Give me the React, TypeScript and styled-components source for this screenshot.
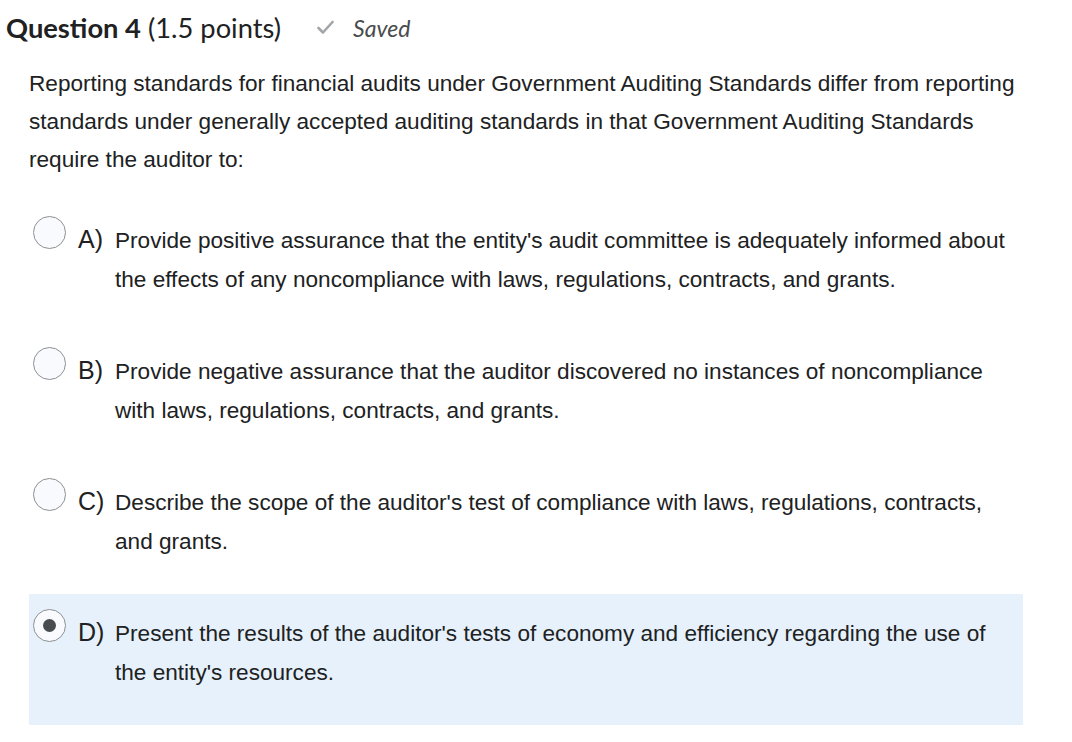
import React from "react";
import styled, { createGlobalStyle } from "styled-components";

const Global = createGlobalStyle`
  html, body { margin: 0; padding: 0; background: #ffffff; }
  body { font-family: "Liberation Sans", Arial, sans-serif; color: #202122; }
`;

const Page = styled.div`
  width: 1072px;
  height: 742px;
  overflow: hidden;
  box-sizing: border-box;
  padding: 0 49px 0 0;
`;

const Header = styled.div`
  display: flex;
  align-items: center;
  height: 55px;
  padding-left: 6px;
  font-family: Lato, "Liberation Sans", sans-serif;
`;

const Title = styled.h2`
  margin: 0;
  font-size: 27.3px;
  font-weight: 400;
  color: #202122;
  strong { font-weight: 700; }
`;

const SavedTag = styled.span`
  display: flex;
  align-items: center;
  gap: 19px;
  margin-left: 36px;
  font-style: italic;
  font-size: 23px;
  color: #494c4e;
`;

const Prompt = styled.p`
  margin: 10px 0 0 29px;
  font-size: 22.6px;
  line-height: 38px;
`;

const Options = styled.div`
  display: flex;
  flex-direction: column;
  margin: 22px 0 0 29px;
`;

const Option = styled.label<{ $selected?: boolean }>`
  display: flex;
  align-items: flex-start;
  height: 131px;
  box-sizing: border-box;
  padding: 15px 0 0 4px;
  background: ${(p) => (p.$selected ? "#e6f1fb" : "transparent")};
`;

const Radio = styled.span<{ $checked?: boolean }>`
  flex: none;
  width: 33px;
  height: 33px;
  box-sizing: border-box;
  border-radius: 50%;
  border: 1px solid #8d9093;
  background: #f9fafe;
  display: flex;
  align-items: center;
  justify-content: center;
  &::after {
    content: "";
    display: ${(p) => (p.$checked ? "block" : "none")};
    width: 13px;
    height: 13px;
    border-radius: 50%;
    background: #494c4e;
  }
`;

const Letter = styled.span`
  flex: none;
  width: 37px;
  margin-left: 12px;
  margin-top: 4px;
  font-size: 25px;
  line-height: 39px;
  color: #202122;
`;

const OptionText = styled.span`
  font-size: 22.6px;
  line-height: 39px;
  margin-top: 5px;
  max-width: 900px;
`;

const options = [
  {
    letter: "A)",
    text:
      "Provide positive assurance that the entity's audit committee is adequately informed about the effects of any noncompliance with laws, regulations, contracts, and grants.",
  },
  {
    letter: "B)",
    text:
      "Provide negative assurance that the auditor discovered no instances of noncompliance with laws, regulations, contracts, and grants.",
  },
  {
    letter: "C)",
    text:
      "Describe the scope of the auditor's test of compliance with laws, regulations, contracts, and grants.",
  },
  {
    letter: "D)",
    text:
      "Present the results of the auditor's tests of economy and efficiency regarding the use of the entity's resources.",
    selected: true,
  },
];

export default function App() {
  return (
    <Page>
      <Global />
      <Header>
        <Title>
          <strong>Question 4</strong> (1.5 points)
        </Title>
        <SavedTag>
          <svg width="17" height="15" viewBox="0 0 17 15" fill="none">
            <polyline
              points="1.5,8 6,12.5 15.5,2"
              stroke="#a3a6a9"
              strokeWidth="2.6"
              strokeLinecap="round"
              strokeLinejoin="round"
            />
          </svg>
          Saved
        </SavedTag>
      </Header>
      <Prompt>
        Reporting standards for financial audits under Government Auditing Standards differ from reporting
        standards under generally accepted auditing standards in that Government Auditing Standards
        require the auditor to:
      </Prompt>
      <Options>
        {options.map((o) => (
          <Option key={o.letter} $selected={o.selected}>
            <Radio $checked={o.selected} />
            <Letter>{o.letter}</Letter>
            <OptionText>{o.text}</OptionText>
          </Option>
        ))}
      </Options>
    </Page>
  );
}
